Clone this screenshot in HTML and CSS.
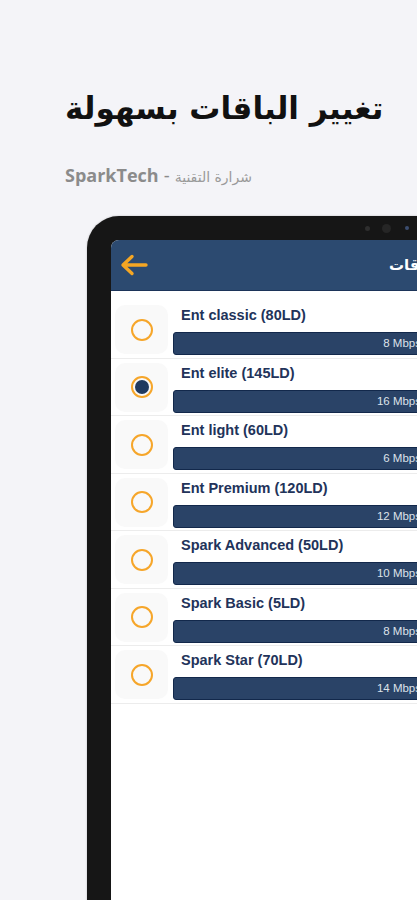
FILE: index.html
```html
<!DOCTYPE html>
<html lang="ar">
<head>
    <meta charset="UTF-8">
    <meta name="viewport" content="width=device-width, initial-scale=1.0">
    <title>SparkTech - الباقات</title>
    <link rel="stylesheet" href="styles.css">
</head>
<body>
    <div class="promo">
        <h1 class="headline" dir="rtl">تغيير الباقات بسهولة</h1>
        <p class="subtitle" dir="rtl"><span class="sub-ar">شرارة التقنية</span> - <span class="sub-en">SparkTech</span></p>
    </div>

    <div class="device">
        <div class="bezel-top">
            <span class="dot dot-small"></span>
            <span class="dot dot-cam"></span>
            <span class="dot dot-sensor"></span>
        </div>
        <div class="screen">
            <div class="app-bar">
                <svg class="back" width="28" height="22" viewBox="0 0 28 22">
                    <path d="M26 11H4M12 2.5L3 11l9 8.5" fill="none" stroke="#f5a623" stroke-width="3.4" stroke-linecap="round" stroke-linejoin="round"/>
                </svg>
                <span class="app-title">الباقات</span>
            </div>

            <ul class="plans">
                <li class="plan">
                    <div class="radio-card"><span class="radio"></span></div>
                    <div class="plan-info">
                        <div class="plan-name">Ent classic (80LD)</div>
                        <div class="speed">8 Mbps</div>
                    </div>
                </li>
                <li class="plan">
                    <div class="radio-card"><span class="radio checked"></span></div>
                    <div class="plan-info">
                        <div class="plan-name">Ent elite (145LD)</div>
                        <div class="speed">16 Mbps</div>
                    </div>
                </li>
                <li class="plan">
                    <div class="radio-card"><span class="radio"></span></div>
                    <div class="plan-info">
                        <div class="plan-name">Ent light (60LD)</div>
                        <div class="speed">6 Mbps</div>
                    </div>
                </li>
                <li class="plan">
                    <div class="radio-card"><span class="radio"></span></div>
                    <div class="plan-info">
                        <div class="plan-name">Ent Premium (120LD)</div>
                        <div class="speed">12 Mbps</div>
                    </div>
                </li>
                <li class="plan">
                    <div class="radio-card"><span class="radio"></span></div>
                    <div class="plan-info">
                        <div class="plan-name">Spark Advanced (50LD)</div>
                        <div class="speed">10 Mbps</div>
                    </div>
                </li>
                <li class="plan">
                    <div class="radio-card"><span class="radio"></span></div>
                    <div class="plan-info">
                        <div class="plan-name">Spark Basic (5LD)</div>
                        <div class="speed">8 Mbps</div>
                    </div>
                </li>
                <li class="plan">
                    <div class="radio-card"><span class="radio"></span></div>
                    <div class="plan-info">
                        <div class="plan-name">Spark Star (70LD)</div>
                        <div class="speed">14 Mbps</div>
                    </div>
                </li>
            </ul>
        </div>
    </div>
</body>
</html>
```

FILE: styles.css
```css
html, body {
    margin: 0;
    height: 900px;
    overflow: hidden;
}
body {
    background-color: #f4f4f8;
    font-family: "Liberation Sans", Arial, sans-serif;
}
.promo {
    padding: 82px 0 0 65px;
    height: 134px;
}
.headline {
    margin: 0;
    text-align: left;
    font-family: "DejaVu Sans", sans-serif;
    font-size: 31px;
    font-weight: bold;
    line-height: 52px;
    color: #111;
}
.subtitle {
    margin: 30px 0 0;
    text-align: left;
    color: #8b8b8b;
    font-size: 18px;
    line-height: 22px;
}
.sub-ar {
    font-family: "DejaVu Sans", sans-serif;
    font-size: 14px;
    color: #9a9a9a;
}
.sub-en {
    font-family: "Open Sans", sans-serif;
    font-weight: bold;
}
.device {
    margin-left: 87px;
    width: 398px;
    height: 700px;
    background-color: #161616;
    border-radius: 32px 32px 0 0;
    padding-left: 24px;
    box-shadow: 0 0 2px rgba(0, 0, 0, 0.25);
}
.bezel-top {
    height: 24px;
    display: flex;
    align-items: center;
}
.dot {
    border-radius: 50%;
    background-color: #2e2e2e;
}
.dot-small {
    width: 5px;
    height: 5px;
    margin-left: 254px;
}
.dot-cam {
    width: 9px;
    height: 9px;
    margin-left: 12px;
    background-color: #262626;
}
.dot-sensor {
    width: 4px;
    height: 4px;
    margin-left: 14px;
    background-color: #3b4d70;
}
.screen {
    width: 350px;
    height: 676px;
    background-color: #fff;
    border-radius: 8px 8px 0 0;
    overflow: hidden;
}
.app-bar {
    height: 50px;
    background-color: #2c4a70;
    border-bottom: 1px solid #1c3459;
    display: flex;
    align-items: center;
    justify-content: space-between;
    padding: 0 19px 0 9px;
}
.back {
    display: block;
}
.app-title {
    direction: rtl;
    font-family: "DejaVu Sans", sans-serif;
    font-weight: bold;
    font-size: 15px;
    color: #fff;
}
.plans {
    list-style: none;
    margin: 0;
    padding: 10px 0 0;
}
.plan {
    height: 56.5px;
    border-bottom: 1px solid #ececec;
    display: flex;
    padding: 0 31px 0 4px;
}
.radio-card {
    width: 53px;
    height: 49px;
    margin-top: 4px;
    border-radius: 10px;
    background-color: #f9f9f9;
    display: flex;
    align-items: center;
    justify-content: center;
}
.radio {
    width: 18px;
    height: 18px;
    border: 2px solid #f6a62a;
    border-radius: 50%;
    box-sizing: content-box;
    display: flex;
    align-items: center;
    justify-content: center;
}
.radio.checked::after {
    content: "";
    width: 14px;
    height: 14px;
    border-radius: 50%;
    background-color: #203a60;
}
.plan-info {
    flex: 1;
    margin-left: 5px;
}
.plan-name {
    margin-top: 6px;
    padding-left: 8px;
    font-size: 14.5px;
    font-weight: bold;
    line-height: 16px;
    color: #22335a;
}
.speed {
    margin-top: 9px;
    height: 21px;
    line-height: 21px;
    background-color: #2a4367;
    border: 1px solid #12284b;
    border-radius: 3px;
    text-align: right;
    padding-right: 8px;
    font-size: 11.5px;
    color: #dde2ea;
}
```
